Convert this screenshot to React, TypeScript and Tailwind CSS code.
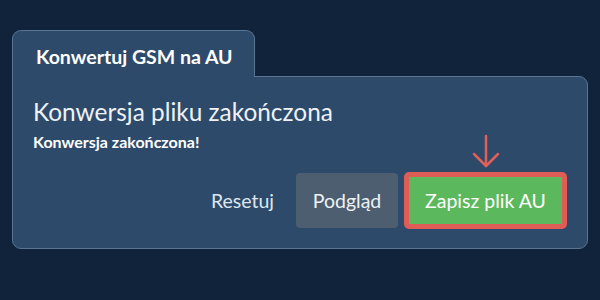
export default function App() {
    return (
        <div className="w-[600px] h-[300px] bg-[#11233a] pt-[30px] px-[12px]" style={{ fontFamily: 'Lato, "Liberation Sans", sans-serif' }}>
            <div className="flex">
                <div className="w-[243px] h-[47px] -mb-px relative z-10 bg-[#2d4a6a] border border-b-0 border-[#5a7592] rounded-t-[9px] pl-[23px] pt-[11px]">
                    <span className="text-white font-bold text-[19.5px]">Konwertuj GSM na AU</span>
                </div>
            </div>
            <div className="w-[576px] bg-[#2d4a6a] border border-[#5a7592] rounded-b-[9px] rounded-tr-[9px] px-[20px] pt-[20px] pb-[19px]">
                <h2 className="text-[#eef2f6] text-[24.4px] leading-[30px]">Konwersja pliku zakończona</h2>
                <p className="text-white text-[16px] font-bold mt-[5px] leading-[19px]">Konwersja zakończona!</p>
                <div className="flex justify-end items-center mt-[21px]">
                    <button className="text-[#dfe6ee] text-[19.5px] mr-[22px]">Resetuj</button>
                    <button className="h-[55px] w-[102px] rounded-[4px] bg-[#4d5e70] text-[#eef2f6] text-[19.5px] mr-[6px]">Podgląd</button>
                    <div className="relative">
                        <svg className="absolute left-1/2 -translate-x-1/2 -top-[38px]" width="30" height="35" viewBox="0 0 30 35" fill="none" stroke="#e0605a" strokeWidth="2.5" strokeLinecap="round" strokeLinejoin="round">
                            <path d="M15 2 V32" />
                            <path d="M3 20 L15 32 L27 20" />
                        </svg>
                        <button className="h-[57px] w-[163px] rounded-[5px] bg-[#5cb85c] border-[5px] border-[#df5d57] text-white text-[19.5px]">Zapisz plik AU</button>
                    </div>
                </div>
            </div>
        </div>
    );
}
